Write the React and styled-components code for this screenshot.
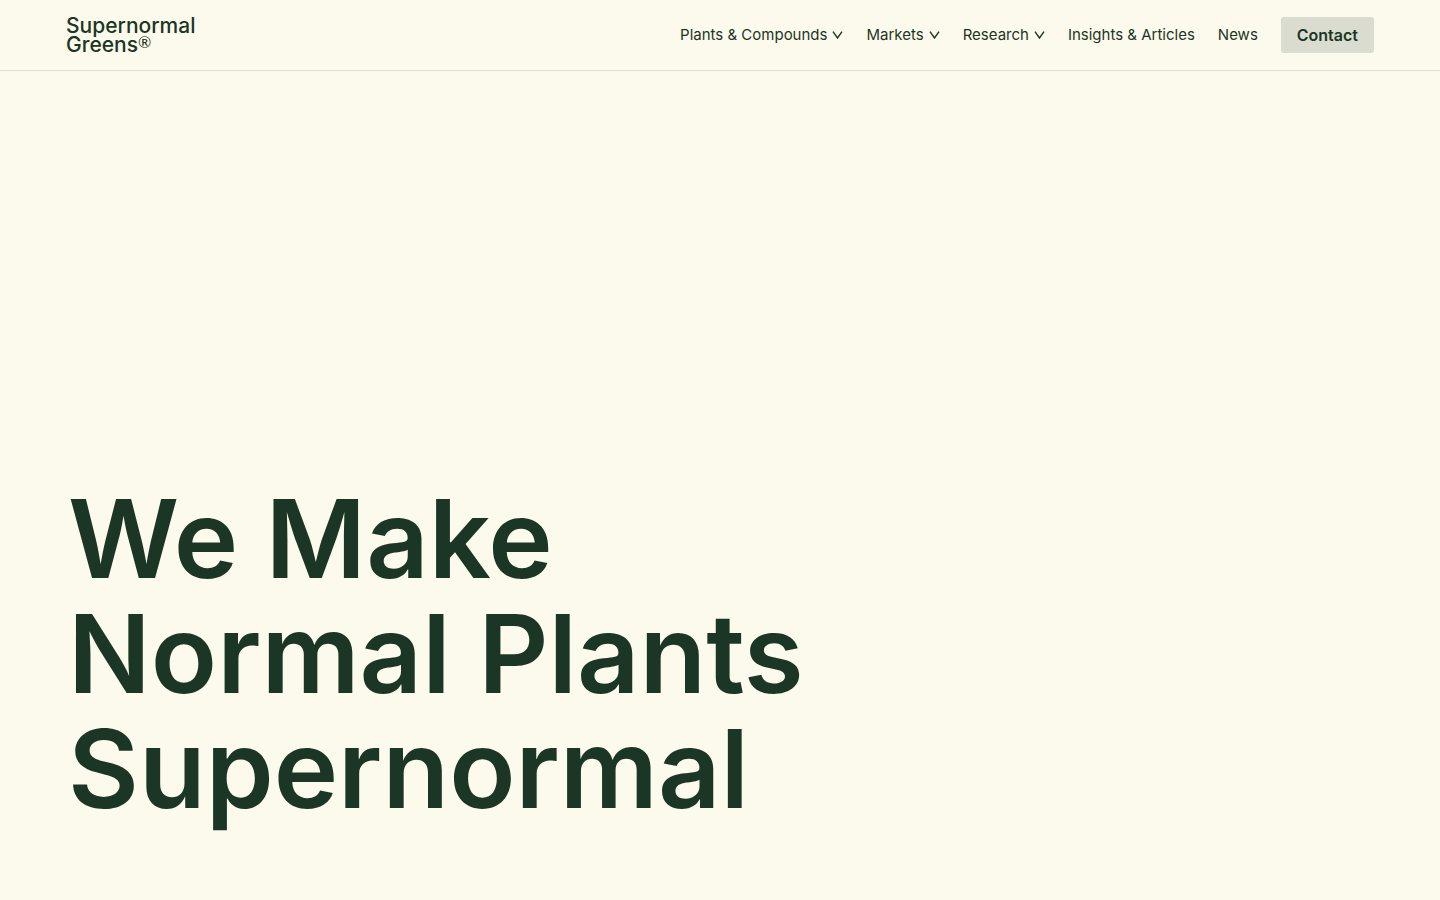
import React from "react";
import styled, { createGlobalStyle } from "styled-components";

const Global = createGlobalStyle`
  *, *::before, *::after { box-sizing: border-box; }
  body {
    margin: 0;
    background: #fcfaec;
    color: #1b3624;
    font-family: Inter, "Liberation Sans", sans-serif;
  }
`;

const Page = styled.div`
  min-height: 100vh;
  display: flex;
  flex-direction: column;
`;

const Header = styled.header`
  display: flex;
  align-items: center;
  justify-content: space-between;
  min-height: 71px;
  padding: 0 66px;
  border-bottom: 1px solid #dcddd0;
`;

const Logo = styled.a`
  color: inherit;
  text-decoration: none;
  font-size: 21px;
  line-height: 19px;
  font-weight: 500;
`;

const LogoLine = styled.span`
  display: block;
`;

const Mark = styled.sup`
  font-family: Lato, "Liberation Sans", sans-serif;
  font-size: 16px;
  line-height: 0;
  font-weight: 400;
  vertical-align: 4px;
`;

const Nav = styled.nav`
  display: flex;
  align-items: center;
  gap: 23px;
`;

const NavButton = styled.button`
  display: flex;
  align-items: center;
  gap: 5px;
  padding: 0;
  border: 0;
  background: none;
  color: inherit;
  font: inherit;
  font-size: 15px;
  line-height: 24px;
  cursor: pointer;
`;

const NavLink = styled.a`
  color: inherit;
  text-decoration: none;
  font-size: 15px;
  line-height: 24px;
`;

const Contact = styled(NavLink)`
  padding: 6px 16px;
  border-radius: 3px;
  background: #d9dccf;
  font-size: 16px;
  font-weight: 600;
`;

const Hero = styled.main`
  flex: 1;
  display: flex;
  align-items: flex-end;
  padding: 0 68px 74px;
`;

const Title = styled.h1`
  margin: 0;
  font-size: 109px;
  line-height: 115px;
  font-weight: 600;
`;

const TitleLine = styled.span`
  display: block;
`;

const Chevron = () => (
  <svg width="11" height="8" viewBox="0 0 11 8" fill="none" aria-hidden="true">
    <path d="M1 0.6 5.5 7 10 0.6" stroke="currentColor" strokeWidth="1.4" />
  </svg>
);

export default function App() {
  return (
    <Page>
      <Global />
      <Header>
        <Logo href="#">
          <LogoLine>Supernormal</LogoLine>
          <LogoLine>Greens<Mark>®</Mark></LogoLine>
        </Logo>
        <Nav>
          {["Plants & Compounds", "Markets", "Research"].map((label) => (
            <NavButton type="button" key={label}>
              {label}
              <Chevron />
            </NavButton>
          ))}
          <NavLink href="#">Insights &amp; Articles</NavLink>
          <NavLink href="#">News</NavLink>
          <Contact href="#">Contact</Contact>
        </Nav>
      </Header>
      <Hero>
        <Title>
          <TitleLine>We Make</TitleLine>
          <TitleLine>Normal Plants</TitleLine>
          <TitleLine>Supernormal</TitleLine>
        </Title>
      </Hero>
    </Page>
  );
}
